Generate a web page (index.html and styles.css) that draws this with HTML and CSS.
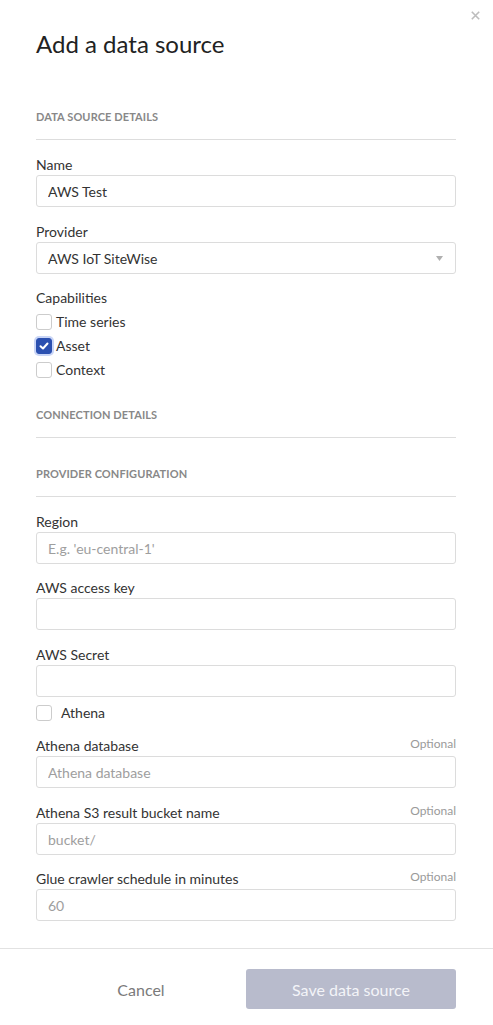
FILE: index.html
```html
<!DOCTYPE html>
<html lang="en">
<head>
<meta charset="utf-8">
<title>Add a data source</title>
<link rel="stylesheet" href="styles.css">
</head>
<body>
<div class="modal">
  <button class="close" aria-label="Close">
    <svg width="9" height="9" viewBox="0 0 9 9"><path d="M0.8 0.8 L8.2 8.2 M8.2 0.8 L0.8 8.2" stroke="#bdbdbd" stroke-width="1.6" fill="none"/></svg>
  </button>
  <h1 class="title">Add a data source</h1>

  <div class="content">
    <h2 class="section-title first">Data source details</h2>

    <div class="field">
      <div class="label-row"><label class="label">Name</label></div>
      <input class="input" type="text" value="AWS Test">
    </div>

    <div class="field">
      <div class="label-row"><label class="label">Provider</label></div>
      <div class="select">
        <span>AWS IoT SiteWise</span>
        <svg class="arrow" width="7" height="5" viewBox="0 0 7 5"><path d="M0 0 H7 L3.5 5 Z" fill="#b0b0b0"/></svg>
      </div>
    </div>

    <div class="field tight">
      <div class="label-row"><label class="label">Capabilities</label></div>
      <div class="checks">
        <div class="check-row"><span class="box"></span><span class="check-text">Time series</span></div>
        <div class="check-row"><span class="box checked"><svg width="10" height="8" viewBox="0 0 10 8"><path d="M1.5 4.2 L4 6.5 L8.5 1.5" stroke="#fff" stroke-width="2" fill="none" stroke-linecap="round" stroke-linejoin="round"/></svg></span><span class="check-text">Asset</span></div>
        <div class="check-row"><span class="box"></span><span class="check-text">Context</span></div>
      </div>
    </div>

    <h2 class="section-title after-checks">Connection details</h2>
    <h2 class="section-title">Provider configuration</h2>

    <div class="field">
      <div class="label-row"><label class="label">Region</label></div>
      <input class="input" type="text" placeholder="E.g. 'eu-central-1'">
    </div>

    <div class="field tight">
      <div class="label-row"><label class="label">AWS access key</label></div>
      <input class="input" type="text">
    </div>

    <div class="field">
      <div class="label-row"><label class="label">AWS Secret</label></div>
      <input class="input" type="text">
    </div>

    <div class="check-row athena"><span class="box"></span><span class="check-text">Athena</span></div>

    <div class="field after-athena">
      <div class="label-row"><label class="label">Athena database</label><span class="optional">Optional</span></div>
      <input class="input" type="text" placeholder="Athena database">
    </div>

    <div class="field">
      <div class="label-row"><label class="label">Athena S3 result bucket name</label><span class="optional">Optional</span></div>
      <input class="input" type="text" placeholder="bucket/">
    </div>

    <div class="field tight">
      <div class="label-row"><label class="label">Glue crawler schedule in minutes</label><span class="optional">Optional</span></div>
      <input class="input" type="text" placeholder="60">
    </div>
  </div>

  <div class="footer">
    <button class="btn btn-cancel">Cancel</button>
    <button class="btn btn-save">Save data source</button>
  </div>
</div>
</body>
</html>
```

FILE: styles.css
```css
* { box-sizing: border-box; }

html, body {
  margin: 0;
  padding: 0;
  background: #ffffff;
}

body {
  font-family: Lato, "Open Sans", "Liberation Sans", sans-serif;
  color: #333333;
}

.modal {
  position: relative;
  width: 493px;
  min-height: 1025px;
  display: flex;
  flex-direction: column;
}

.close {
  position: absolute;
  top: 11px;
  right: 13px;
  width: 9px;
  height: 9px;
  padding: 0;
  border: 0;
  background: none;
  display: flex;
}

.title {
  margin: 29px 36px 0;
  font-size: 24px;
  line-height: 30px;
  font-weight: 400;
  color: #222222;
}

.content {
  padding: 0 37px 0 36px;
}

.section-title {
  margin: 28px 0 0;
  padding-bottom: 14px;
  border-bottom: 1px solid #dddddd;
  font-size: 11px;
  line-height: 16px;
  font-weight: 700;
  text-transform: uppercase;
  color: #888888;
  letter-spacing: 0.1px;
}

.section-title.first { margin-top: 50px; }
.section-title.after-checks { margin-top: 25px; }

.field { margin-top: 15px; }
.field.tight { margin-top: 14px; }
.field.after-athena { margin-top: 11px; }

.label-row {
  display: flex;
  justify-content: space-between;
  align-items: flex-start;
  height: 20px;
}

.label {
  font-size: 14px;
  line-height: 20px;
  color: #333333;
}

.optional {
  font-size: 12px;
  line-height: 16px;
  color: #9a9a9a;
}

.input, .select {
  display: flex;
  align-items: center;
  width: 100%;
  height: 32px;
  margin: 0;
  padding: 0 11px;
  border: 1px solid #dcdcdc;
  border-radius: 3px;
  background: #ffffff;
  font-family: inherit;
  font-size: 14px;
  color: #333333;
  outline: none;
}

.input::placeholder { color: #9e9e9e; }

.select { justify-content: space-between; }
.select .arrow { margin-right: 1px; }

.checks {
  margin-top: 2px;
  display: flex;
  flex-direction: column;
}

.check-row {
  display: flex;
  align-items: center;
  height: 24px;
  gap: 4px;
}

.check-row.athena {
  margin-top: 4px;
  gap: 9px;
}

.box {
  width: 16px;
  height: 16px;
  border: 1px solid #cccccc;
  border-radius: 3px;
  background: #ffffff;
  display: flex;
  align-items: center;
  justify-content: center;
  flex: none;
}

.box.checked {
  background: #2b50b0;
  border-color: #2b50b0;
  box-shadow: 0 0 0 2px #c9d5f6;
}

.check-text {
  font-size: 14px;
  line-height: 20px;
  color: #333333;
}

.footer {
  margin-top: auto;
  border-top: 1px solid #e2e2e2;
  padding: 20px 37px 16px 36px;
  display: flex;
}

.btn {
  flex: 1;
  height: 40px;
  border: 0;
  border-radius: 3px;
  font-family: inherit;
  font-size: 16px;
  background: none;
  padding: 0;
}

.btn-cancel { color: #7a7a7a; }

.btn-save {
  background: #b8bbcc;
  color: #f3f4f8;
}
```
